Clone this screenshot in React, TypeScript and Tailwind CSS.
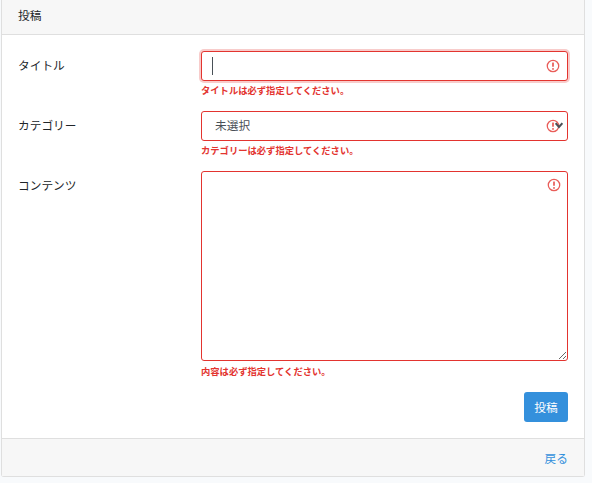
import React from "react";

function Alert() {
  return (
    <svg viewBox="0 0 12 12" className="absolute right-[7.5px] top-[7px] h-[14px] w-[14px]" fill="none">
      <circle cx="6" cy="6" r="4.9" stroke="#e3342f" strokeWidth="1.1" opacity="0.8" />
      <rect x="5.3" y="2.9" width="1.4" height="3.8" rx="0.3" fill="#e3342f" opacity="0.85" />
      <circle cx="6" cy="8.5" r="0.8" fill="#e3342f" opacity="0.85" />
    </svg>
  );
}

function Err({ children }: { children: React.ReactNode }) {
  return <div className="mt-[3px] h-[13px] text-[9.3px] leading-[13px] font-bold text-[#e3342f]">{children}</div>;
}

export default function App() {
  return (
    <div className="h-[483px] w-[592px] overflow-hidden bg-[#f8fafc] pl-px font-['Noto_Sans_CJK_JP','Noto_Sans',sans-serif] text-[11.7px] text-[#212529]">
      <div className="w-[584px] h-[477px] rounded-b-[3px] border-x border-b border-[#dfdfdf] bg-white flex flex-col">
        <div className="h-[35px] shrink-0 border-b border-[#dfdfdf] bg-[#f7f7f7] pl-4 pt-[6px] leading-[18px]">投稿</div>
        <div className="flex-1 pl-4 pr-4 pt-4">
          <div className="flex h-[60px]">
            <label className="w-[183px] shrink-0 pt-[5px] leading-[18px]">タイトル</label>
            <div className="flex-1">
              <div className="relative h-[30px] rounded-[3px] border border-[#e3342f] bg-white shadow-[0_0_0_2px_rgba(227,52,47,0.25)]">
                <div className="ml-[10px] mt-[5px] h-[18px] w-px bg-[#495057]" />
                <Alert />
              </div>
              <Err>タイトルは必ず指定してください。</Err>
            </div>
          </div>
          <div className="flex h-[60px]">
            <label className="w-[183px] shrink-0 pt-[5px] leading-[18px]">カテゴリー</label>
            <div className="flex-1">
              <div className="relative h-[30px] rounded-[3px] border border-[#e3342f] bg-white pl-[13px] pt-[4px] leading-[18px] text-[#495057]">
                未選択
                <Alert />
                <svg viewBox="0 0 8 7" className="absolute right-[4px] top-[10px] h-[7px] w-[8px]">
                  <path d="M0.6 1.2 L4 5 L7.4 1.2" fill="none" stroke="#495057" strokeWidth="2" />
                </svg>
              </div>
              <Err>カテゴリーは必ず指定してください。</Err>
            </div>
          </div>
          <div className="flex">
            <label className="w-[183px] shrink-0 pt-[5px] leading-[18px]">コンテンツ</label>
            <div className="flex-1">
              <div className="relative h-[190px]">
                <textarea className="block h-[190px] w-full resize-y rounded-[3px] border border-[#e3342f] bg-white outline-none" />
                <Alert />
              </div>
              <div className="pt-px">
                <Err>内容は必ず指定してください。</Err>
              </div>
            </div>
          </div>
          <div className="mt-[14px] flex justify-end">
            <button className="h-[30px] w-[44px] rounded-[3px] bg-[#3490dc] text-[11.7px] text-white">投稿</button>
          </div>
        </div>
        <div className="flex h-[38px] shrink-0 items-center justify-end border-t border-[#dfdfdf] bg-[#f7f7f7] pr-4">
          <a className="text-[#3490dc]">戻る</a>
        </div>
      </div>
    </div>
  );
}
